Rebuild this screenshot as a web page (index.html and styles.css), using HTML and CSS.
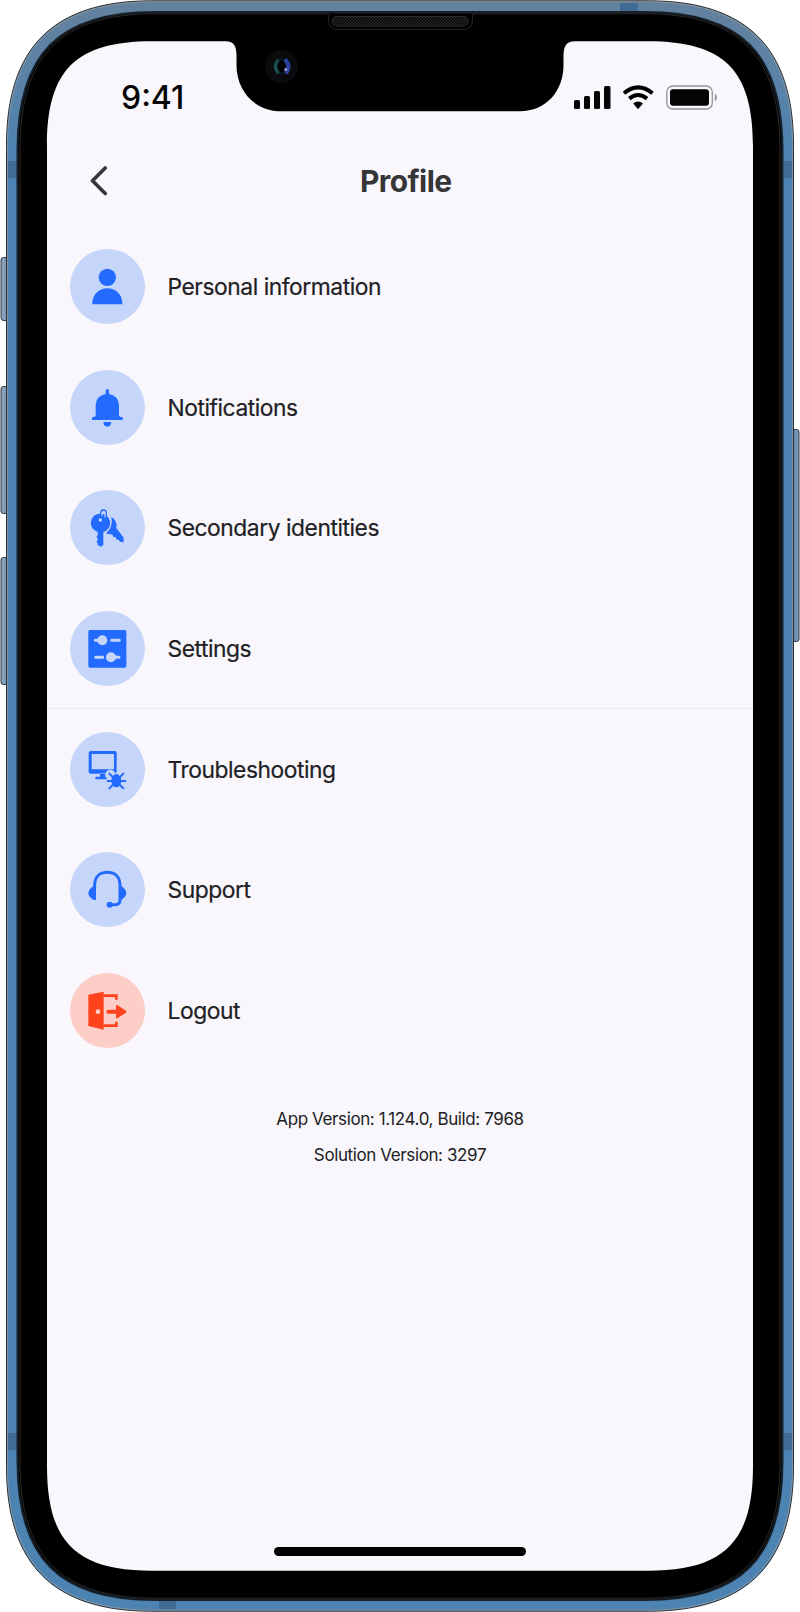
FILE: index.html
```html
<!DOCTYPE html>
<html lang="en">
<head>
<meta charset="utf-8">
<title>Profile</title>
<link rel="stylesheet" href="styles.css">
</head>
<body>
<div class="device">
  <svg class="frame" viewBox="0 0 800 1612" aria-hidden="true">
    <defs>
      <linearGradient id="metal" x1="0" y1="0" x2="0" y2="1">
        <stop offset="0" stop-color="#62819d"/><stop offset=".03" stop-color="#5f82a3"/><stop offset=".1" stop-color="#4c83b3"/><stop offset="1" stop-color="#4c83b3"/>
      </linearGradient>
      <linearGradient id="button" x1="0" x2="1">
        <stop offset="0" stop-color="#8ca5bb"/><stop offset=".5" stop-color="#7f9dba"/><stop offset="1" stop-color="#54789b"/>
      </linearGradient>
      <linearGradient id="buttonRight" x1="0" x2="1">
        <stop offset="0" stop-color="#5b7fa8"/><stop offset="1" stop-color="#7b9bbd"/>
      </linearGradient>
      <pattern id="mesh" width="3" height="3" patternUnits="userSpaceOnUse">
        <rect width="3" height="3" fill="#0b0b0b"/><circle cx="1" cy="1" r=".7" fill="#373737"/><circle cx="2.5" cy="2.5" r=".6" fill="#303030"/>
      </pattern>
    </defs>
    <g fill="url(#button)" stroke="#303740">
      <rect x="1" y="257.500" width="9" height="63" rx="2.500"/>
      <rect x="1" y="386.500" width="9" height="127" rx="2.500"/>
      <rect x="1" y="557.500" width="9" height="127" rx="2.500"/>
      <rect x="790" y="429.500" width="9" height="212" rx="2.500" fill="url(#buttonRight)"/>
    </g>
    <path fill="url(#metal)" stroke="#2a2d31" d="M6.500 145.500C6.500 47.500 53.500 .8 151.500 .8H648.500C746.500 .8 793.500 47.500 793.500 145.500V1466.500C793.500 1564.500 746.500 1611.200 648.500 1611.200H151.500C53.500 1611.200 6.500 1564.500 6.500 1466.500Z"/>
    <path fill="none" stroke="#9a9c9b" stroke-width=".7" d="M7.500 145.500C7.500 48.500 54.500 1.900 151.500 1.900H648.500C745.500 1.900 792.500 48.500 792.500 145.500V1466.500C792.500 1563.500 745.500 1610.100 648.500 1610.100H151.500C54.500 1610.100 7.500 1563.500 7.500 1466.500Z"/>
    <g fill="#3f6b94">
      <rect x="8" y="161" width="9" height="17"/><rect x="784" y="161" width="8" height="17"/>
      <rect x="8" y="1433" width="9" height="17"/><rect x="784" y="1433" width="8" height="17"/>
      <rect x="620" y="3" width="18" height="9"/><rect x="159" y="1601" width="17" height="8"/>
    </g>
    <path fill="#000" stroke="#18202a" stroke-width="2" d="M17.500 150C17.500 54 58.500 12 155 12H645C741.500 12 782.500 54 782.500 150V1462C782.500 1558 741.500 1600 645 1600H155C58.500 1600 17.500 1558 17.500 1462Z"/>
    <path fill="none" stroke="#292a2b" stroke-width="1" d="M20 150C20 56 60.500 13.800 155 13.800H645C739.500 13.800 780 56 780 150V1462C780 1556 739.500 1598.200 645 1598.200H155C60.500 1598.200 20 1556 20 1462Z"/>
    <path fill="#000" stroke="#242424" d="M327 13.500Q328.500 13.500 328.500 16V20Q328.500 29.500 338 29.500H463Q472.500 29.500 472.500 20V16Q472.500 13.500 474 13.500"/>
    <rect x="332" y="16.500" width="136" height="9.500" rx="4.700" fill="url(#mesh)" stroke="#3b3b3b" stroke-width=".7"/>
    <path fill="#f9f7fb" d="M47 146C47 70 76 41.300 152 41.300H226C233 41.300 236.300 45 236.500 55V65C236.500 91 255 111.300 281 111.300H520C546 111.300 563.500 91 563.500 65V55C564 45 567 41.300 575 41.300H648C724 41.300 753 70 753 146V1466C753 1542 724 1570.700 648 1570.700H152C76 1570.700 47 1542 47 1466Z"/>
    <circle cx="281.500" cy="66.500" r="16.500" fill="#0b0b0d"/>
    <circle cx="281.500" cy="66.500" r="8.500" fill="#0a1424"/>
    <path d="M278.500 59.500Q272 66 278.500 73.500" fill="none" stroke="#17534b" stroke-width="3"/>
    <path d="M285 59.500Q291.500 66 286 73.500" fill="none" stroke="#2c449f" stroke-width="4"/>
    <ellipse cx="281.500" cy="66.500" rx="3.500" ry="6" fill="#010203"/>
    <circle cx="285.800" cy="69.500" r="1.500" fill="#9a9be0"/>
  </svg>

  <div class="screen">
    <div class="status">
      <span class="time">9:41</span>
      <svg class="indicators" viewBox="0 0 144 26" aria-hidden="true">
        <rect x="0" y="15" width="6" height="9" rx="1.500"/><rect x="10" y="11" width="6" height="13" rx="1.500"/><rect x="20" y="6" width="6" height="18" rx="1.500"/><rect x="30" y="1" width="6.500" height="23" rx="1.500"/>
        <g fill="none" stroke="#000" stroke-width="4"><path d="M50 8.300Q64 -3.500 78.500 8.300"/><path d="M55.300 13.600Q64 6.400 73 13.600"/></g>
        <path d="M59.200 18.500Q64 14.700 69 18.500L64.700 23.400Q64 24.100 63.300 23.400Z"/>
        <rect x="92.800" y="1" width="45.500" height="23" rx="6" fill="none" stroke="#949396" stroke-width="1.300"/>
        <rect x="96" y="4.200" width="39" height="16.600" rx="3"/>
        <path d="M140.800 8.800Q143 10 143 12.500T140.800 16.200Z" fill="#949396"/>
      </svg>
    </div>

    <header class="header">
      <svg class="back" viewBox="0 0 18 30" aria-label="Back"><path d="M15.200 2L2.500 14.700L15.200 27.400" fill="none" stroke="#363538" stroke-width="3.600" stroke-linecap="round" stroke-linejoin="round"/></svg>
      <h1 class="title">Profile</h1>
    </header>

    <ul class="menu">
      <li class="item"><span class="badge"><svg class="icon" viewBox="0 0 225 225"><circle cx="112" cy="85" r="26"/><path d="M67 166V159C70 134 88 118 112 118S154 134 157 159V166Z"/></svg></span><span class="label">Personal information</span></li>
      <li class="item"><span class="badge"><svg class="icon" viewBox="0 0 225 225"><path d="M107 72V62Q107 57 112 57T117 62V72Q147 78 147 107V134Q147 141 156 141Q159 142 159 146Q159 150 154 150H70Q65 150 65 146Q65 142 69 141Q77 141 77 134V107Q77 78 107 72ZM100 156H124Q123 170 112 170T100 156Z"/></svg></span><span class="label">Notifications</span></li>
      <li class="item"><span class="badge"><svg class="icon" viewBox="0 0 225 225"><path fill-rule="evenodd" d="M91 71A28 28 0 0 1 100 126V165L93 170L83 165V159L79 156L83 151V145L79 141L83 136V126A28 28 0 0 1 91 71ZM91 85A5 5 0 1 0 91 95A5 5 0 1 0 91 85Z"/><path d="M92 81V70Q92 60 100 60Q109 60 109 70V80" fill="none" stroke="#236bfe" stroke-width="4"/><path d="M96 78V70Q96 65 100 65T105 70V83" fill="none" stroke="#c6d6fa" stroke-width="3"/><path d="M124 80Q143 93 139 114L161 143V157L150 155L146 149H140L137 142L130 141L128 134L117 132Q110 133 109 128Q130 112 124 80Z"/></svg></span><span class="label">Secondary identities</span></li>
      <li class="item"><span class="badge"><svg class="icon" viewBox="0 0 225 225"><rect x="55" y="57" width="114" height="113" rx="5"/><g fill="#c6d6fa" stroke="#c6d6fa" stroke-width="9" stroke-linecap="round"><path d="M76 88H105M125 88H148M77 139H98M123 139H147"/><g stroke="none"><circle cx="97" cy="88" r="15"/><circle cx="123" cy="139" r="15"/></g></g></svg></span><span class="label">Settings</span></li>
      <li class="item group-start"><span class="badge"><svg class="icon" viewBox="0 0 225 225"><path fill-rule="evenodd" d="M62 57H134Q140 57 140 63V121Q136 125 128 125H62Q56 125 56 119V63Q56 57 62 57ZM65 66V112H132V66ZM90 124H106V134H109Q113 138 109 142H78Q73 138 78 134H90Z"/><circle cx="121" cy="128" r="15" fill="#c6d6fa"/><ellipse cx="139" cy="146" rx="15" ry="20"/><path d="M118 125L128 135M160 125L150 135M113 147H166M118 169L128 159M160 169L150 159" fill="none" stroke="#236bfe" stroke-width="6" stroke-linecap="round"/></svg></span><span class="label">Troubleshooting</span></li>
      <li class="item"><span class="badge"><svg class="icon" viewBox="0 0 225 225"><path d="M74 106V100C74 74 90 61 112 61S150 74 150 100V144Q150 158 136 158H120" fill="none" stroke="#236bfe" stroke-width="9"/><path d="M78 101V143Q69 146 63 138Q55 132 55 123Q55 114 63 108Q69 100 78 101ZM147 101V143Q155 146 161 138Q169 132 169 123Q169 114 161 108Q155 100 147 101Z"/><circle cx="119" cy="158" r="9"/></svg></span><span class="label">Support</span></li>
      <li class="item"><span class="badge badge-danger"><svg class="icon" viewBox="0 0 225 225"><path fill-rule="evenodd" d="M55 65L101 56V170L55 159ZM84 109A7 7 0 1 0 84 123A7 7 0 1 0 84 109Z"/><path d="M100 68H139V80M100 158H139V146" fill="none" stroke="#ff431c" stroke-width="8"/><path d="M115 116H145" stroke="#ff431c" stroke-width="12" stroke-linecap="round"/><path d="M138 97Q139 94 143 97L168 113Q171 116 168 119L143 135Q139 138 138 134Z"/></svg></span><span class="label">Logout</span></li>
    </ul>

    <footer class="versions">
      <span class="app-version">App Version: 1.124.0, Build: 7968</span>
      <span class="solution-version">Solution Version: 3297</span>
    </footer>
    <div class="home"></div>
  </div>
</div>
</body>
</html>
```
FILE: styles.css
```css
* { box-sizing: border-box; }
body { margin: 0; background: #fff; font-family: Inter, "Liberation Sans", sans-serif; color: #202024; }
.device { display: grid; width: 800px; height: 1612px; }
.frame, .screen { grid-area: 1 / 1; }
.frame { display: block; width: 800px; height: 1612px; }
.screen { display: flex; flex-direction: column; margin: 41px 47px; height: 1530px; }
.status { display: flex; justify-content: space-between; align-items: flex-start; padding: 38px 35px 0 74px; height: 96px; }
.time { font-size: 32px; line-height: 38px; font-weight: 550; color: #050505; letter-spacing: 0; }
.indicators { width: 144px; height: 26px; margin-top: 6px; fill: #050505; }
.header { display: flex; align-items: center; height: 88px; padding-left: 43px; }
.back { width: 18px; height: 30px; }
.title { margin: -1px 0 0 252px; font-size: 30px; line-height: 40px; font-weight: 750; color: #363538; letter-spacing: -.6px; }
.menu { list-style: none; margin: 0; padding: 1px 0 0; }
.item { display: flex; align-items: center; gap: 22.500px; height: 120.7px; padding-left: 23px; }
.group-start { box-shadow: 0 -1px #ecebef; }
.badge { width: 75px; height: 75px; border-radius: 50%; background: #c6d6fa; flex: none; }
.badge-danger { background: #fdcdc7; }
.icon { display: block; width: 75px; height: 75px; fill: #236bfe; }
.badge-danger .icon { fill: #ff431c; }
.label { font-size: 22.800px; line-height: 30px; letter-spacing: -.45px; padding-top: 1px; white-space: nowrap; -webkit-text-stroke: .2px; }
.versions { display: flex; flex-direction: column; align-items: center; gap: 12px; padding-top: 36px; font-size: 17px; line-height: 24px; }
.app-version, .solution-version { letter-spacing: -.39px; }
.home { width: 252px; height: 9px; margin: auto auto 15px; border-radius: 5px; background: #000; }
```
